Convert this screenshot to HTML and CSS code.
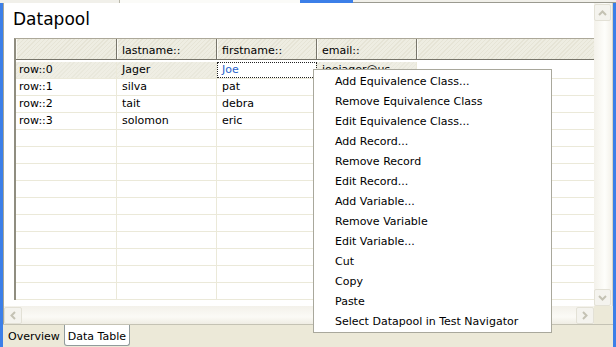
FILE: index.html
```html
<!DOCTYPE html>
<html lang="en">
<head>
    <meta charset="UTF-8">
    <title>Datapool</title>
    <link rel="stylesheet" href="styles.css">
</head>
<body>
    <div class="top-strip">
        <span class="strip-tab"></span>
        <span class="strip-gap"></span>
        <span class="strip-active"></span>
        <span class="strip-rest"></span>
    </div>
    <div class="window">
        <div class="viewport">
            <div class="main">
                <h1 class="title">Datapool</h1>
                <div class="grid">
                    <div class="row head">
                        <div class="cell c1"></div>
                        <div class="cell">lastname::</div>
                        <div class="cell">firstname::</div>
                        <div class="cell">email::</div>
                        <div class="cell fill"></div>
                    </div>
                    <div class="row selected first">
                        <div class="cell c1">row::0</div>
                        <div class="cell">Jager</div>
                        <div class="cell focus">Joe</div>
                        <div class="cell mail">joejager@us</div>
                        <div class="cell fill"></div>
                    </div>
                    <div class="row">
                        <div class="cell c1">row::1</div>
                        <div class="cell">silva</div>
                        <div class="cell">pat</div>
                        <div class="cell"></div>
                        <div class="cell fill"></div>
                    </div>
                    <div class="row">
                        <div class="cell c1">row::2</div>
                        <div class="cell">tait</div>
                        <div class="cell">debra</div>
                        <div class="cell"></div>
                        <div class="cell fill"></div>
                    </div>
                    <div class="row">
                        <div class="cell c1">row::3</div>
                        <div class="cell">solomon</div>
                        <div class="cell">eric</div>
                        <div class="cell"></div>
                        <div class="cell fill"></div>
                    </div>
                    <div class="row"><div class="cell c1"></div><div class="cell"></div><div class="cell"></div><div class="cell"></div><div class="cell fill"></div></div>
                    <div class="row"><div class="cell c1"></div><div class="cell"></div><div class="cell"></div><div class="cell"></div><div class="cell fill"></div></div>
                    <div class="row"><div class="cell c1"></div><div class="cell"></div><div class="cell"></div><div class="cell"></div><div class="cell fill"></div></div>
                    <div class="row"><div class="cell c1"></div><div class="cell"></div><div class="cell"></div><div class="cell"></div><div class="cell fill"></div></div>
                    <div class="row"><div class="cell c1"></div><div class="cell"></div><div class="cell"></div><div class="cell"></div><div class="cell fill"></div></div>
                    <div class="row"><div class="cell c1"></div><div class="cell"></div><div class="cell"></div><div class="cell"></div><div class="cell fill"></div></div>
                    <div class="row"><div class="cell c1"></div><div class="cell"></div><div class="cell"></div><div class="cell"></div><div class="cell fill"></div></div>
                    <div class="row"><div class="cell c1"></div><div class="cell"></div><div class="cell"></div><div class="cell"></div><div class="cell fill"></div></div>
                    <div class="row"><div class="cell c1"></div><div class="cell"></div><div class="cell"></div><div class="cell"></div><div class="cell fill"></div></div>
                    <div class="row"><div class="cell c1"></div><div class="cell"></div><div class="cell"></div><div class="cell"></div><div class="cell fill"></div></div>
                </div>
            </div>
            <div class="vscroll">
                <div class="sbtn">
                    <svg width="9" height="6" viewBox="0 0 9 6"><path d="M1 5 L4.5 1.5 L8 5" fill="none" stroke="#c4c2b4" stroke-width="2"/></svg>
                </div>
                <div class="vtrack"></div>
                <div class="sbtn">
                    <svg width="9" height="6" viewBox="0 0 9 6"><path d="M1 1 L4.5 4.5 L8 1" fill="none" stroke="#c4c2b4" stroke-width="2"/></svg>
                </div>
            </div>
        </div>
        <div class="hbar">
            <div class="hscroll">
                <div class="sbtn">
                    <svg width="6" height="9" viewBox="0 0 6 9"><path d="M5 1 L1.5 4.5 L5 8" fill="none" stroke="#c4c2b4" stroke-width="2"/></svg>
                </div>
                <div class="htrack"></div>
                <div class="sbtn">
                    <svg width="6" height="9" viewBox="0 0 6 9"><path d="M1 1 L4.5 4.5 L1 8" fill="none" stroke="#c4c2b4" stroke-width="2"/></svg>
                </div>
            </div>
            <div class="corner"></div>
        </div>
        <div class="tabs">
            <span class="tab">Overview</span>
            <span class="tab active">Data Table</span>
        </div>

        <ul class="menu">
            <li>Add Equivalence Class...</li>
            <li>Remove Equivalence Class</li>
            <li>Edit Equivalence Class...</li>
            <li>Add Record...</li>
            <li>Remove Record</li>
            <li>Edit Record...</li>
            <li>Add Variable...</li>
            <li>Remove Variable</li>
            <li>Edit Variable...</li>
            <li>Cut</li>
            <li>Copy</li>
            <li>Paste</li>
            <li>Select Datapool in Test Navigator</li>
        </ul>
    </div>
</body>
</html>
```

FILE: styles.css
```css
body {
    margin: 0;
    font-family: "DejaVu Sans", Tahoma, sans-serif;
    font-size: 11px;
    color: #000;
    background: #fff;
}
.top-strip {
    display: flex;
    height: 3px;
    width: 616px;
}
.strip-tab {
    width: 119px;
    background: #f1f0ea;
    border-right: 1px solid #b9b7aa;
}
.strip-gap {
    width: 180px;
    background: #fbfbf8;
}
.strip-active {
    width: 53px;
    background: #3c7fe8;
}
.strip-rest {
    flex: 1;
    background: #f1f0ea;
    border-bottom: 1px solid #9b9a90;
}
.window {
    position: relative;
    width: 616px;
    height: 344px;
    box-sizing: border-box;
    border-left: 3px solid #3c7fe8;
    border-right: 3px solid #3c7fe8;
    display: flex;
    flex-direction: column;
    background: #ece9d8;
}
.viewport {
    display: flex;
    height: 303px;
    border-left: 1px solid #a8a797;
    border-right: 1px solid #d8d5c6;
    background: #fff;
    overflow: hidden;
}
.main {
    flex: 1;
    padding: 0 0 0 10px;
    overflow: hidden;
}
.title {
    margin: 6px 0 0 -1px;
    height: 29px;
    font-size: 17px;
    font-weight: normal;
    line-height: 20px;
}
.grid {
    border-left: 2px solid #8f8d80;
    border-top: 1px solid #aca899;
}
.row {
    display: flex;
    height: 16px;
    border-bottom: 1px solid #ebe9d9;
}
.cell {
    width: 100px;
    flex: none;
    border-right: 1px solid #ebe9d9;
    padding-left: 5px;
    box-sizing: border-box;
    line-height: 16px;
    white-space: nowrap;
    overflow: hidden;
}
.cell.c1 {
    width: 101px;
    padding-left: 3px;
}
.cell.fill {
    flex: 1;
    border-right: none;
}
.row.head {
    height: 20px;
    border-bottom: 1px solid #77756a;
    background: repeating-linear-gradient(135deg, #eeede2 0 2px, #e6e4d6 2px 3px);
}
.row.head .cell {
    padding-top: 3px;
    line-height: 17px;
    border-right: 1px solid #77756a;
    box-shadow: inset 1px 0 0 #fbfaf4;
}
.row.head .cell.fill {
    border-right: none;
}
.row.first {
    margin-top: 2px;
}
.row.selected .cell {
    background: repeating-linear-gradient(135deg, #efeee4 0 2px, #e9e8dc 2px 3px);
}
.row.selected .cell.fill {
    background: #fff;
}
.row.selected .cell.focus {
    background: #fff;
    color: #2a62c9;
    outline: 1px dotted #222;
    outline-offset: -1px;
}
.vscroll {
    width: 18px;
    flex: none;
    display: flex;
    flex-direction: column;
    padding-top: 1px;
    background: linear-gradient(90deg, #f3f1ea, #fefefb 60%, #f3f1ea);
}
.vtrack, .htrack {
    flex: 1;
}
.sbtn {
    width: 17px;
    height: 17px;
    box-sizing: border-box;
    border: 1px solid #e3e1d6;
    border-radius: 2px;
    background: #f4f3ee;
    display: flex;
    align-items: center;
    justify-content: center;
}
.hbar {
    display: flex;
    height: 18px;
    border-left: 1px solid #a8a797;
    background: #f5f4ee;
}
.hscroll {
    flex: 1;
    display: flex;
    padding: 1px 0 0 0;
    background: linear-gradient(#f3f1ea, #fbfaf6 60%, #efede4);
}
.hscroll .sbtn {
    width: 18px;
}
.corner {
    width: 19px;
    background: #ece9d8;
}
.tabs {
    flex: 1;
    display: flex;
    align-items: flex-start;
    padding-left: 1px;
    border-top: 1px solid #c4c2b4;
    background: #ece9d8;
}
.tab {
    padding: 5px 4px 0 4px;
    height: 20px;
    box-sizing: border-box;
}
.tab.active {
    background: #fff;
    border: 1px solid #919b9c;
    border-top: none;
    border-radius: 0 0 3px 3px;
    height: 21px;
    padding: 5px 3px 0 3px;
}
.menu {
    position: absolute;
    left: 310px;
    top: 66px;
    width: 239px;
    height: 264px;
    box-sizing: border-box;
    margin: 0;
    padding: 2px 0;
    list-style: none;
    background: #fff;
    border: 1px solid #a9a89c;
}
.menu li {
    height: 20px;
    line-height: 20px;
    padding-left: 21px;
    white-space: nowrap;
}
```
